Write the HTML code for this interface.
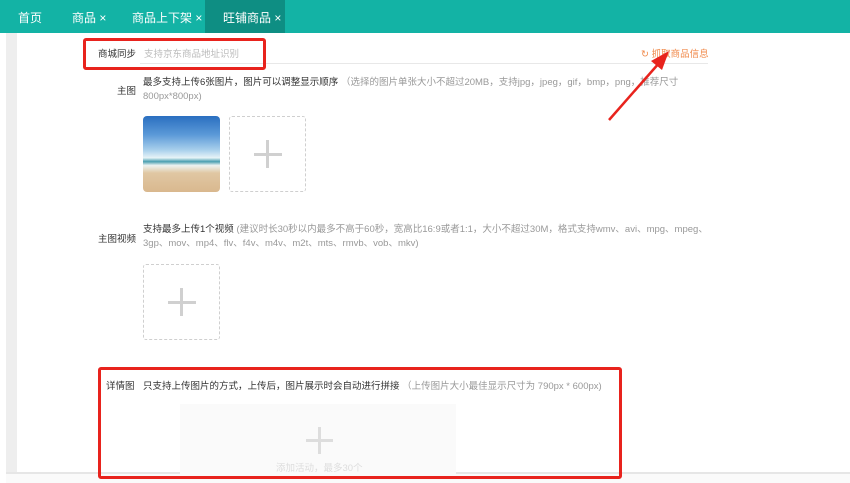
<!DOCTYPE html>
<html><head><meta charset="utf-8"><style>
*{margin:0;padding:0;box-sizing:border-box}
body{width:850px;height:483px;overflow:hidden;background:#fff;font-family:"Liberation Sans","Noto Sans CJK SC",sans-serif;position:relative;font-size:9.5px;color:#333}
.a{position:absolute;white-space:nowrap}
.hdr{left:0;top:0;width:850px;height:33px;background:#13b3a5}
.tab{color:#fff;font-size:12px;top:9px}
.g{color:#999}
.dash{position:absolute;border:1.5px dashed #cfcfcf;border-radius:3px;width:77px;height:76px}
.dash:before,.dash:after{content:"";position:absolute;background:#d0d0d0;left:50%;top:50%}
.dash:before{width:28px;height:3px;margin:-1.5px 0 0 -14px}
.dash:after{width:3px;height:28px;margin:-14px 0 0 -1.5px}
.lbl{text-align:right;width:60px;left:76px}
.red{position:absolute;border:3px solid #e8231d;border-radius:3px}
</style></head><body>
<div class="a hdr"></div>
<div class="a" style="left:205px;top:0;width:80px;height:33px;background:#0e8e83"></div>
<div class="a tab" style="left:18px">首页</div>
<div class="a tab" style="left:72px">商品 ×</div>
<div class="a tab" style="left:132px">商品上下架 ×</div>
<div class="a tab" style="left:223px">旺铺商品 ×</div>
<div class="a" style="left:6px;top:33px;width:11px;height:440px;background:#eeeeee"></div>
<div class="a" style="left:6px;top:472px;width:844px;height:2px;background:#e6e6e6"></div>
<div class="a" style="left:6px;top:474px;width:844px;height:9px;background:#fafafa"></div>

<div class="a lbl" style="top:46px">商城同步</div>
<div class="a" style="left:144px;top:46px;color:#bbb">支持京东商品地址识别</div>
<div class="a" style="left:140px;top:63px;width:568px;height:1px;background:#e8e8e8"></div>
<div class="a" style="left:641px;top:46px;color:#f08a4b">↻ 抓取商品信息</div>
<div class="red" style="left:83px;top:38px;width:183px;height:32px"></div>

<div class="a lbl" style="top:83px">主图</div>
<div class="a" style="left:143px;top:76px;line-height:14px">最多支持上传6张图片，图片可以调整显示顺序 <span class="g">（选择的图片单张大小不超过20MB，支持jpg，jpeg，gif，bmp，png，推荐尺寸</span><br><span class="g">800px*800px)</span></div>
<div class="a" style="left:143px;top:116px;width:77px;height:76px;border-radius:4px;background:linear-gradient(180deg,#2a6fc0 0%,#5c9ad8 25%,#a9d0ec 45%,#e6f3f7 55%,#4a9fb0 60%,#eef3f1 65%,#e0c7a3 75%,#d9b88e 100%)"></div>
<div class="dash" style="left:229px;top:116px"></div>

<div class="a lbl" style="top:231px">主图视频</div>
<div class="a" style="left:143px;top:223px;line-height:14px">支持最多上传1个视频 <span class="g">(建议时长30秒以内最多不高于60秒，宽高比16:9或者1:1，大小不超过30M，格式支持wmv、avi、mpg、mpeg、</span><br><span class="g">3gp、mov、mp4、flv、f4v、m4v、m2t、mts、rmvb、vob、mkv)</span></div>
<div class="dash" style="left:143px;top:264px"></div>

<div class="a" style="left:106px;top:378px">详情图</div>
<div class="a" style="left:143px;top:378px">只支持上传图片的方式，上传后，图片展示时会自动进行拼接 <span class="g">（上传图片大小最佳显示尺寸为 790px * 600px)</span></div>
<div class="a" style="left:180px;top:404px;width:276px;height:70px;background:#fafafa"></div>
<div class="a" style="left:306px;top:439px;width:27px;height:3px;background:#ddd"></div>
<div class="a" style="left:318px;top:427px;width:3px;height:27px;background:#ddd"></div>
<div class="a" style="left:276px;top:460px;color:#ddd">添加活动，最多30个</div>
<div class="red" style="left:98px;top:367px;width:524px;height:112px"></div>

<svg class="a" style="left:0;top:0" width="850" height="483">
<line x1="609" y1="120" x2="660" y2="62" stroke="#e8231d" stroke-width="2.5"/>
<polygon points="669,51 651,61 662,70" fill="#e8231d"/>
</svg>
</body></html>
